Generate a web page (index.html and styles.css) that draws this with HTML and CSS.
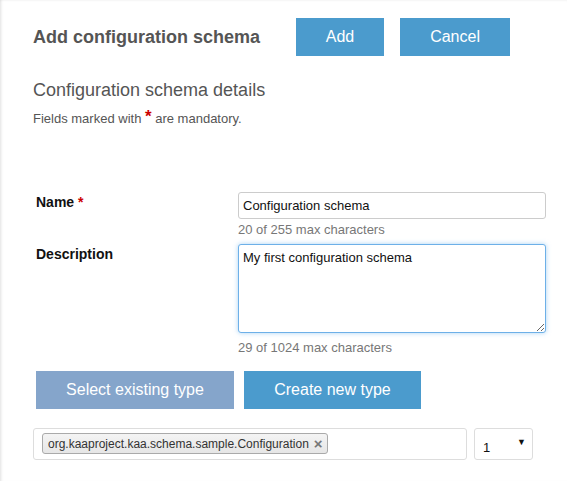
FILE: index.html
```html
<!DOCTYPE html>
<html>
<head>
<meta charset="utf-8">
<link rel="stylesheet" href="styles.css">
</head>
<body>
<div class="page">
  <div class="header">
    <h1 class="title">Add configuration schema</h1>
    <button class="btn btn-add">Add</button>
    <button class="btn btn-cancel">Cancel</button>
  </div>
  <h2 class="section">Configuration schema details</h2>
  <p class="note">Fields marked with <span class="req req-note">*</span> are mandatory.</p>
  <div class="form">
    <div class="row">
      <label class="label">Name <span class="req">*</span></label>
      <div class="field">
        <input class="input" type="text" value="Configuration schema">
        <div class="help">20 of 255 max characters</div>
      </div>
    </div>
    <div class="row">
      <label class="label">Description</label>
      <div class="field">
        <textarea class="textarea focused">My first configuration schema</textarea>
        <div class="help help-ta">29 of 1024 max characters</div>
      </div>
    </div>
    <div class="type-buttons">
      <button class="btn btn-select">Select existing type</button>
      <button class="btn btn-create">Create new type</button>
    </div>
  </div>
  <div class="type-row">
    <div class="tag-box">
      <span class="chip">org.kaaproject.kaa.schema.sample.Configuration<span class="chip-x">×</span></span>
    </div>
    <div class="select"><span class="select-val">1</span><span class="arrow">▼</span></div>
  </div>
</div>
</body>
</html>
```
FILE: styles.css
```css
html, body {
  margin: 0;
  padding: 0;
  background: #fff;
}
body {
  font-family: "Liberation Sans", Arial, sans-serif;
  color: #333;
  min-height: 481px;
  box-shadow: inset 3px 0 3px -2px rgba(0, 0, 0, 0.12), inset 0 2px 3px -2px rgba(0, 0, 0, 0.08);
}
.page {
  padding: 18px 0 0 33px;
}
.header {
  display: flex;
  align-items: center;
}
.title {
  margin: 0 36px 0 0;
  font-size: 18px;
  font-weight: bold;
  color: #555;
  line-height: 20px;
}
.btn {
  border: none;
  border-radius: 0;
  font-family: "Liberation Sans", Arial, sans-serif;
  font-size: 16px;
  color: #fff;
  height: 38px;
  padding: 0;
  background: #4b9bcd;
}
.btn-add { width: 88px; }
.btn-cancel { width: 110px; margin-left: 16px; }
.section {
  margin: 24px 0 0;
  font-size: 18px;
  font-weight: normal;
  line-height: 20px;
  color: #555;
}
.note {
  margin: 11px 0 0;
  font-size: 13px;
  line-height: 15px;
  color: #555;
}
.req {
  color: #c00;
  font-weight: bold;
}
.req-note {
  font-size: 17px;
  line-height: 10px;
  position: relative;
  top: -1px;
}
.form {
  margin-top: 66px;
  padding-left: 3px;
}
.row {
  display: grid;
  grid-template-columns: 202px 308px;
  margin-bottom: 7px;
}
.label {
  font-size: 14px;
  font-weight: bold;
  line-height: 16px;
  color: #111;
  padding-top: 2px;
}
.field {
  display: flex;
  flex-direction: column;
}
.input, .textarea {
  box-sizing: border-box;
  width: 308px;
  margin: 0;
  border: 1px solid #ccc;
  border-radius: 3px;
  font-family: "Liberation Sans", Arial, sans-serif;
  font-size: 13px;
  color: #111;
  padding: 0 4px;
  outline: none;
}
.input {
  height: 27px;
}
.textarea {
  display: block;
  height: 89px;
  padding: 5px 4px;
  line-height: 16px;
  resize: both;
}
.focused {
  border-color: #6db0e8;
  box-shadow: 0 0 5px rgba(102, 175, 233, 0.55);
}
.help {
  margin-top: 3px;
  font-size: 13px;
  line-height: 15px;
  color: #777;
}
.help-ta {
  margin-top: 7px;
}
.type-buttons {
  display: flex;
  gap: 10px;
  margin-top: 16px;
}
.btn-select {
  width: 198px;
  background: #85a5cb;
}
.btn-create {
  width: 177px;
}
.type-row {
  display: flex;
  gap: 7px;
  margin-top: 19px;
}
.tag-box {
  box-sizing: border-box;
  width: 434px;
  height: 32px;
  border: 1px solid #ddd;
  border-radius: 3px;
  padding: 4px 0 0 8px;
}
.chip {
  display: inline-flex;
  align-items: center;
  box-sizing: border-box;
  height: 21px;
  padding: 0 4px 0 5px;
  border: 1px solid #aaa;
  border-radius: 3px;
  background: linear-gradient(#f4f4f4, #e6e6e6);
  font-size: 12px;
  color: #333;
}
.chip-x {
  margin-left: 5px;
  font-size: 15px;
  font-weight: bold;
  color: #777;
}
.select {
  box-sizing: border-box;
  width: 59px;
  height: 32px;
  border: 1px solid #ddd;
  border-radius: 3px;
  display: flex;
  align-items: center;
  justify-content: space-between;
  padding: 0 6px 0 8px;
  font-size: 13px;
  color: #111;
}
.select-val {
  padding-top: 6px;
}
.arrow {
  font-size: 9px;
  color: #111;
  padding-bottom: 4px;
}
```
